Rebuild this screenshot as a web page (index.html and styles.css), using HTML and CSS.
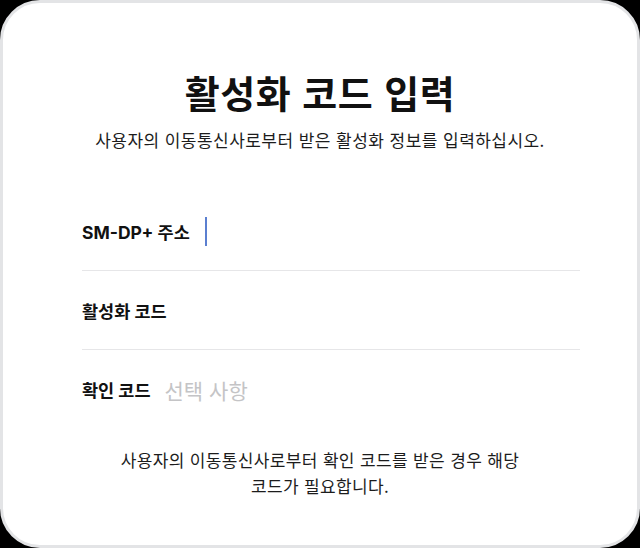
FILE: index.html
```html
<!DOCTYPE html>
<html lang="ko">
<head>
  <meta charset="UTF-8" />
  <meta name="viewport" content="width=device-width, initial-scale=1.0" />
  <title>활성화 코드 입력</title>
  <link rel="stylesheet" href="styles.css">
</head>
<body>
  <div class="sheet">
    <h1 class="title">활성화 코드 입력</h1>
    <p class="subtitle">사용자의 이동통신사로부터 받은 활성화 정보를 입력하십시오.</p>

    <div class="fields">
      <label class="field">
        <span class="field-label">SM-DP+ 주소</span>
        <span class="caret"></span>
      </label>
      <label class="field">
        <span class="field-label">활성화 코드</span>
      </label>
      <label class="field last">
        <span class="field-label">확인 코드</span>
        <span class="placeholder">선택 사항</span>
      </label>
    </div>

    <p class="note">사용자의 이동통신사로부터 확인 코드를 받은 경우 해당<br>코드가 필요합니다.</p>
  </div>
</body>
</html>
```

FILE: styles.css
```css
:root {
  --text: #111;
  --muted: #c4c4c6;
  --line: #e6e6e8;
  --frame: #e3e4e6;
  --caret: #5b7fd0;
}

* {
  margin: 0;
  padding: 0;
  box-sizing: border-box;
}

html, body {
  height: 100%;
}

body {
  background: #000;
  font-family: "Noto Sans CJK KR", "Noto Sans", sans-serif;
  color: var(--text);
}

.sheet {
  height: 100%;
  background: #fff;
  border: 3px solid var(--frame);
  border-radius: 40px;
  display: flex;
  flex-direction: column;
  align-items: center;
  padding-top: 57px;
}

.title {
  font-size: 38px;
  font-weight: 700;
  line-height: 64px;
  letter-spacing: 0.5px;
}

.subtitle {
  font-size: 17px;
  line-height: 24px;
  letter-spacing: 0.45px;
  margin-top: 4px;
  color: #1c1c1c;
}

.fields {
  align-self: flex-start;
  width: 498px;
  margin: 40px 0 0 79px;
}

.field {
  display: flex;
  align-items: center;
  height: 79px;
  border-bottom: 1px solid var(--line);
}

.field.last {
  border-bottom: none;
}

.field-label {
  font-family: Inter, "Noto Sans CJK KR", sans-serif;
  font-size: 17.5px;
  font-weight: 700;
  margin-right: 12px;
}

.caret {
  width: 2px;
  height: 29px;
  background: var(--caret);
  margin-left: 3px;
}

.placeholder {
  font-size: 21px;
  color: var(--muted);
  margin-left: 2px;
}

.note {
  font-size: 17px;
  line-height: 26px;
  letter-spacing: 0.35px;
  text-align: center;
  margin-top: 18px;
  color: #1c1c1c;
}
```
